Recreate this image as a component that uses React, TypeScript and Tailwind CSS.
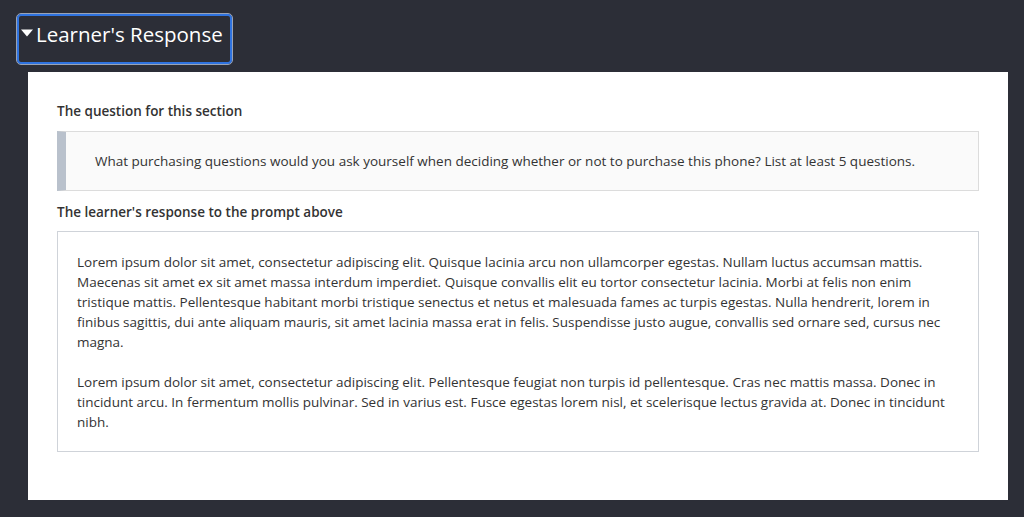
export default function App() {
  return (
    <div className="h-[517px] w-[1024px] overflow-hidden bg-[#2c2e37] font-['Open_Sans',sans-serif]">
      <div className="flex items-start pl-[17px] pt-[14px]">
        <button className="flex h-[50px] w-[215px] items-center gap-[2px] rounded-[4px] border-2 border-[#2f73e0] pb-[10px] pl-[1px] text-[20.5px] font-medium leading-none text-white outline outline-1 outline-[#9aa3b5]">
          <svg width="14" height="10" viewBox="0 0 14 10" className="mt-[-2px]">
            <path d="M1 1.5 L13 1.5 L7 8.5 Z" fill="#ffffff" />
          </svg>
          <span>Learner's Response</span>
        </button>
      </div>
      <div className="ml-[28px] mt-[8px] h-[428px] w-[980px] bg-white px-[29px] pt-[30px]">
        <h3 className="text-[13.5px] font-semibold leading-[18px] text-[#333]">The question for this section</h3>
        <div className="mt-[11px] flex h-[60px] items-center border border-[#dcdcdc] border-l-[9px] border-l-[#b9c1cc] bg-[#fafafa] pl-[29px]">
          <p className="text-[13.5px] text-[#333]">
            What purchasing questions would you ask yourself when deciding whether or not to purchase this phone? List at least 5 questions.
          </p>
        </div>
        <h3 className="mt-[12px] text-[13.5px] font-semibold leading-[18px] text-[#333]">The learner's response to the prompt above</h3>
        <div className="mt-[10px] h-[221px] border border-[#cfd3d9] px-[19px] pt-[20px] text-[13.5px] leading-[20px] text-[#333]">
          <p>
            Lorem ipsum dolor sit amet, consectetur adipiscing elit. Quisque lacinia arcu non ullamcorper egestas. Nullam luctus accumsan mattis. Maecenas sit amet ex sit amet massa interdum imperdiet. Quisque convallis elit eu tortor consectetur lacinia. Morbi at felis non enim tristique mattis. Pellentesque habitant morbi tristique senectus et netus et malesuada fames ac turpis egestas. Nulla hendrerit, lorem in finibus sagittis, dui ante aliquam mauris, sit amet lacinia massa erat in felis. Suspendisse justo augue, convallis sed ornare sed, cursus nec magna.
          </p>
          <p className="mt-[20px]">
            Lorem ipsum dolor sit amet, consectetur adipiscing elit. Pellentesque feugiat non turpis id pellentesque. Cras nec mattis massa. Donec in tincidunt arcu. In fermentum mollis pulvinar. Sed in varius est. Fusce egestas lorem nisl, et scelerisque lectus gravida at. Donec in tincidunt nibh.
          </p>
        </div>
      </div>
    </div>
  );
}
